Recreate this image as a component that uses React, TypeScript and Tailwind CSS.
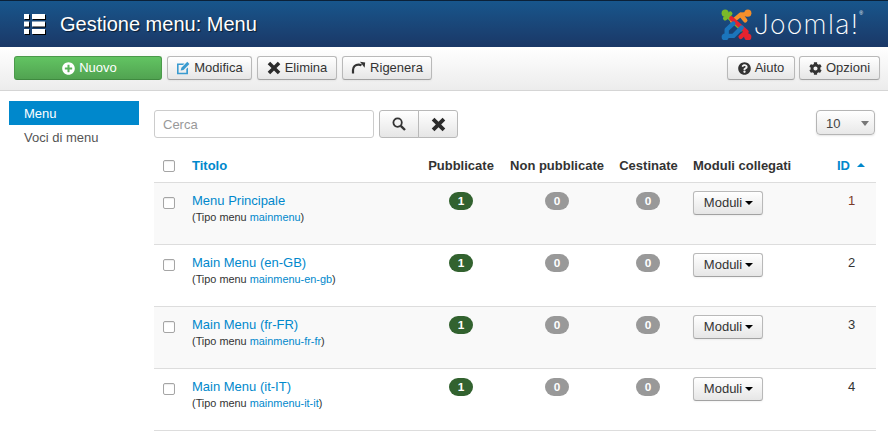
import React from "react";
import { FaPlusCircle, FaQuestionCircle, FaCog } from "react-icons/fa";

const Edit = () => (
  <svg width="14" height="14" viewBox="0 0 14 14">
    <path d="M1 2.500h7.500L7 4H2.600v7.700h7.700V8L12 6.400V13.300H1z" fill="#3a9bd0" />
    <path d="M4.700 9.600l.7-2.900L11.300.8l2.100 2.100-5.900 6z" fill="#3a9bd0" />
  </svg>
);

const Refresh = () => (
  <svg width="15" height="14" viewBox="0 0 15 14" fill="none">
    <path d="M2 12.500V9C2 5.700 4.500 3.600 7.500 3.600c1.300 0 2.200.3 3 .8" stroke="#333" strokeWidth="2.200" />
    <path d="M9 .8l5.200.6-.6 5.400z" fill="#333" />
  </svg>
);

const XIcon = ({ s = 14 }: { s?: number }) => (
  <svg width={s} height={s} viewBox="0 0 14 14" fill="#2b2b2b">
    <path d="M3.200.7 7 4.500 10.800.7l2.500 2.500L9.500 7l3.800 3.800-2.500 2.500L7 9.500l-3.800 3.800-2.500-2.500L4.500 7 .7 3.200z" />
  </svg>
);

const SearchIcon = () => (
  <svg width="14" height="14" viewBox="0 0 14 14" fill="none" stroke="#333">
    <circle cx="5.600" cy="5.600" r="4.200" strokeWidth="1.800" />
    <path d="M8.800 8.800l4.200 4.200" strokeWidth="2.400" />
  </svg>
);

const ListIcon = () => (
  <svg width="21" height="20" viewBox="0 0 21 20" fill="white" className="drop-shadow-[1px_1px_0_#000]">
    <rect x="0" y="0" width="5" height="5" />
    <rect x="8" y="0" width="13" height="5" />
    <rect x="0" y="7.500" width="5" height="5" />
    <rect x="8" y="7.500" width="13" height="5" />
    <rect x="0" y="15" width="5" height="5" />
    <rect x="8" y="15" width="13" height="5" />
  </svg>
);

const JoomlaMark = () => (
  <svg width="31" height="31" viewBox="0 0 30 30" fill="none" strokeLinecap="round" strokeLinejoin="round">
    <g strokeWidth="4.200">
      <path d="M4 9 9 4.500" stroke="#7ab929" />
      <path d="M4.500 5 20 19.500" stroke="#7ab929" />
      <circle cx="4" cy="4" r="3.400" fill="#7ab929" stroke="none" />
      <path d="M11 12 19 5.500 25 5" stroke="#f58f2a" />
      <path d="M19 5.500 23.500 11" stroke="#f58f2a" />
      <circle cx="26" cy="4" r="3.400" fill="#f58f2a" stroke="none" />
      <path d="M10 9 24.500 22 24 26" stroke="#e4232f" />
      <path d="M24.500 22 19 27" stroke="#e4232f" />
      <circle cx="26" cy="27" r="3.400" fill="#e4232f" stroke="none" />
      <path d="M5.500 26 5.500 20 12 14" stroke="#1b75bc" />
      <path d="M5.500 26 12 26 20 18" stroke="#1b75bc" />
      <circle cx="4" cy="27" r="3.400" fill="#1b75bc" stroke="none" />
    </g>
  </svg>
);

const btn =
  "h-6 inline-flex items-center justify-center gap-1 rounded-[3px] border border-[#b9b9b9] border-b-[#a2a2a2] bg-gradient-to-b from-white to-[#e6e6e6] text-[13px] text-[#333] shadow-[inset_0_1px_0_rgba(255,255,255,.2),0_1px_2px_rgba(0,0,0,.05)]";

const rows = [
  { t: "Menu Principale", m: "mainmenu", id: 1, idc: "text-[#7a3a2a]" },
  { t: "Main Menu (en-GB)", m: "mainmenu-en-gb", id: 2, idc: "text-[#333]" },
  { t: "Main Menu (fr-FR)", m: "mainmenu-fr-fr", id: 3, idc: "text-[#333]" },
  { t: "Main Menu (it-IT)", m: "mainmenu-it-it", id: 4, idc: "text-[#333]" },
];

const Check = () => (
  <span className="block w-3 h-3 rounded-[2px] border border-[#a5a5a5] bg-white shadow-[inset_0_1px_1px_rgba(0,0,0,.08)]" />
);

const Badge = ({ v, c }: { v: number; c: string }) => (
  <span className={`inline-flex w-6 h-[18px] items-center justify-center rounded-[9px] text-[11.8px] font-bold text-white ${c}`}>{v}</span>
);

export default function App() {
  return (
    <div className="w-[888px] h-[439px] overflow-hidden bg-white text-[13px] leading-[18px] text-[#333] font-['Liberation_Sans',Arial,sans-serif]">
      <header className="h-[47px] border-t border-t-[#0b2138] bg-gradient-to-b from-[#17568c] to-[#1a3867] flex items-center justify-between">
        <div className="flex items-center pl-6 gap-[15px]">
          <ListIcon />
          <h1 className="text-[20px] leading-[24px] text-white [text-shadow:1px_1px_1px_rgba(0,0,0,.6)]">Gestione menu: Menu</h1>
        </div>
        <div className="flex items-center pr-[25px]">
          <JoomlaMark />
          <span className="ml-[2px] text-[26.5px] leading-[32px] tracking-[1.3px] text-white font-extralight font-['Inter',sans-serif]">Joomla!</span>
          <span className="text-[5px] leading-[5px] text-white self-start mt-[3px]">®</span>
        </div>
      </header>

      <div className="h-[44px] border-b border-[#d5d5d5] bg-gradient-to-b from-white to-[#ececec] pl-[14px] pr-2 pt-[9px] flex items-start justify-between">
        <div className="flex items-center">
          <button className="h-6 w-[148px] pl-[3px] inline-flex items-center justify-center gap-1 rounded-[3px] border border-[#4b9a4b] border-b-[#3f8a3f] bg-gradient-to-b from-[#62c462] to-[#51a351] text-[13px] text-white">
            <FaPlusCircle size={13} /> Nuovo
          </button>
          <button className={`${btn} w-[85px] ml-[5px]`}><Edit /> Modifica</button>
          <button className={`${btn} w-[80px] ml-[5px]`}><XIcon /> Elimina</button>
          <button className={`${btn} w-[90px] ml-[5px]`}><Refresh /> Rigenera</button>
        </div>
        <div className="flex items-center gap-1">
          <button className={`${btn} w-[68px]`}><FaQuestionCircle size={13} /> Aiuto</button>
          <button className={`${btn} w-[81px]`}><FaCog size={13} /> Opzioni</button>
        </div>
      </div>

      <div className="flex pt-[10px] pl-[9px] pr-3">
        <nav className="w-[130px] shrink-0">
          <div className="h-6 bg-[#0088cc] text-white pl-[15px] pt-px flex items-center">Menu</div>
          <div className="h-6 pl-[15px] pt-px flex items-center text-[#555]">Voci di menu</div>
        </nav>
        <main className="flex-1 ml-[15px]">
          <div className="flex items-start pt-[9px] h-[49px]">
            <div className="w-[220px] h-7 rounded-[3px] border border-[#ccc] bg-white pl-2 pt-px flex items-center text-[#999]">Cerca</div>
            <div className="flex ml-[5px] h-7">
              <button className="w-10 flex items-center justify-center rounded-l-[3px] border border-[#b9b9b9] bg-gradient-to-b from-white to-[#e6e6e6]"><SearchIcon /></button>
              <button className="w-10 -ml-px flex items-center justify-center rounded-r-[3px] border border-[#b9b9b9] bg-gradient-to-b from-white to-[#e6e6e6]"><XIcon s={15} /></button>
            </div>
            <div className="ml-auto mr-px w-[59px] h-[25px] rounded-[4px] border border-[#b5b5b5] bg-gradient-to-b from-white to-[#e8e8e8] shadow-[0_1px_2px_rgba(0,0,0,.1)] pl-[9px] pr-[5px] pt-[2px] flex items-center justify-between text-[#444]">
              10
              <span className="w-0 h-0 border-x-4 border-x-transparent border-t-[5px] border-t-[#777]" />
            </div>
          </div>

          <table className="w-full table-fixed border-collapse">
            <colgroup>
              <col className="w-[30px]" />
              <col className="w-[236px]" />
              <col className="w-[82px]" />
              <col className="w-[110px]" />
              <col className="w-[72px]" />
              <col className="w-[117px]" />
              <col />
            </colgroup>
            <thead>
              <tr className="h-[32px] border-b border-[#ddd] font-bold">
                <th className="pl-[9px] align-middle"><Check /></th>
                <th className="pl-2 pt-px text-left text-[#0088cc]">Titolo</th>
                <th className="pt-px text-center">Pubblicate</th>
                <th className="pt-px text-center">Non pubblicate</th>
                <th className="pt-px pl-px text-center whitespace-nowrap">Cestinate</th>
                <th className="pt-px text-left pl-[9px] whitespace-nowrap">Moduli collegati</th>
                <th className="pt-px text-left pl-9 text-[#0088cc] whitespace-nowrap">
                  ID
                  <span className="inline-block ml-[7px] mb-[3px] w-0 h-0 border-x-4 border-x-transparent border-b-4 border-b-[#0088cc]" />
                </th>
              </tr>
            </thead>
            <tbody>
              {rows.map((r, i) => (
                <tr key={r.id} className={`h-[62px] border-b border-[#ddd] align-top ${i % 2 === 0 ? "bg-[#f9f9f9]" : "bg-white"}`}>
                  <td className="pl-[9px] pt-[14px]"><Check /></td>
                  <td className="pl-2 pt-[9px]">
                    <a className="block text-[#0088cc]">{r.t}</a>
                    <div className="text-[10.9px] leading-[15px] text-[#333]">
                      (Tipo menu <a className="text-[#0088cc]">{r.m}</a>)
                    </div>
                  </td>
                  <td className="text-center pt-[9px]"><Badge v={1} c="bg-[#32622f]" /></td>
                  <td className="text-center pt-[9px]"><Badge v={0} c="bg-[#999]" /></td>
                  <td className="text-center pt-[9px]"><Badge v={0} c="bg-[#999]" /></td>
                  <td className="pl-[9px] pt-2">
                    <button className={`${btn} w-[70px] pl-px gap-[3px]`}>
                      Moduli
                      <span className="w-0 h-0 border-x-4 border-x-transparent border-t-4 border-t-black" />
                    </button>
                  </td>
                  <td className={`pl-[47px] pt-[9px] ${r.idc}`}>{r.id}</td>
                </tr>
              ))}
            </tbody>
          </table>
        </main>
      </div>
    </div>
  );
}
